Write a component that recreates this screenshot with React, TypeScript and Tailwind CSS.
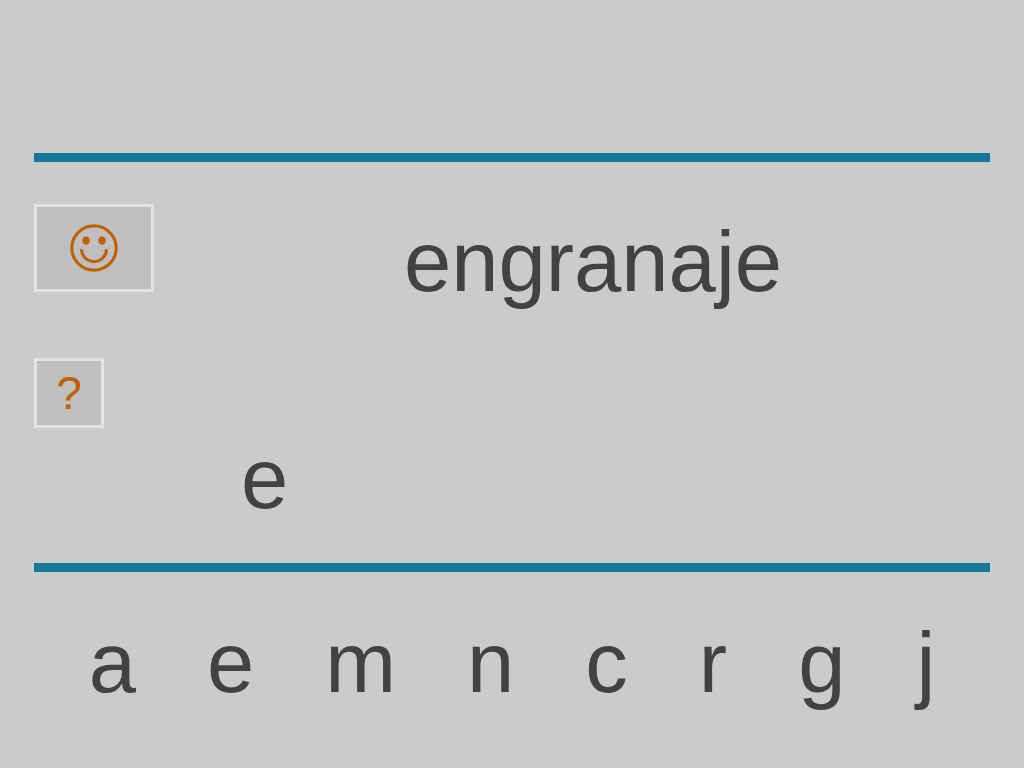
import React, { useState } from 'react';

const WORD = 'engranaje';
const LETTERS = ['a', 'e', 'm', 'n', 'c', 'r', 'g', 'j'];

const SmileIcon: React.FC = () => (
  <svg width="48" height="48" viewBox="0 0 48 48" fill="none" aria-hidden="true">
    <circle cx="24" cy="24" r="22.2" stroke="currentColor" strokeWidth="3.1" />
    <ellipse cx="16" cy="16.6" rx="3.7" ry="4.1" fill="currentColor" />
    <ellipse cx="32" cy="16.6" rx="3.7" ry="4.1" fill="currentColor" />
    <path d="M11.5 25.2C11.7 32.2 17 37.6 24 37.6S36.3 32.2 36.5 25.2" stroke="currentColor" strokeWidth="3.1" />
  </svg>
);

const App: React.FC = () => {
  const [typed, setTyped] = useState('e');

  return (
    <main className="min-h-screen bg-[#cbcbcb] px-[34px] font-['Liberation_Sans',Arial,sans-serif] text-[85px] leading-[96px] text-[#424242]">
      <header className="h-[153px]" />

      <section className="flex gap-[42px] border-y-[9px] border-[#14789a] pt-[42px] pb-9">
        <div className="flex flex-col items-start gap-[66px]">
          <button
            type="button"
            aria-label="Comprobar"
            className="flex h-[88px] w-[120px] items-center justify-center border-3 border-[#e3e3e3] bg-[#bfbfbf] text-[#c06000]"
          >
            <SmileIcon />
          </button>
          <button
            type="button"
            className="flex size-[70px] items-center justify-center border-3 border-[#e3e3e3] bg-[#bfbfbf] text-[46px] leading-none text-[#c06000]"
          >
            ?
          </button>
        </div>

        <div className="flex flex-1 flex-col gap-[121px] pt-[10px]">
          <h1 className="text-center">{WORD}</h1>
          <output className="block min-h-24 pl-[45px]">{typed}</output>
        </div>
      </section>

      <div className="flex flex-wrap justify-center gap-x-[71px] pt-[43px]">
        {LETTERS.map((letter) => (
          <button key={letter} type="button" onClick={() => setTyped(typed + letter)}>
            {letter}
          </button>
        ))}
      </div>
    </main>
  );
};

export default App;
